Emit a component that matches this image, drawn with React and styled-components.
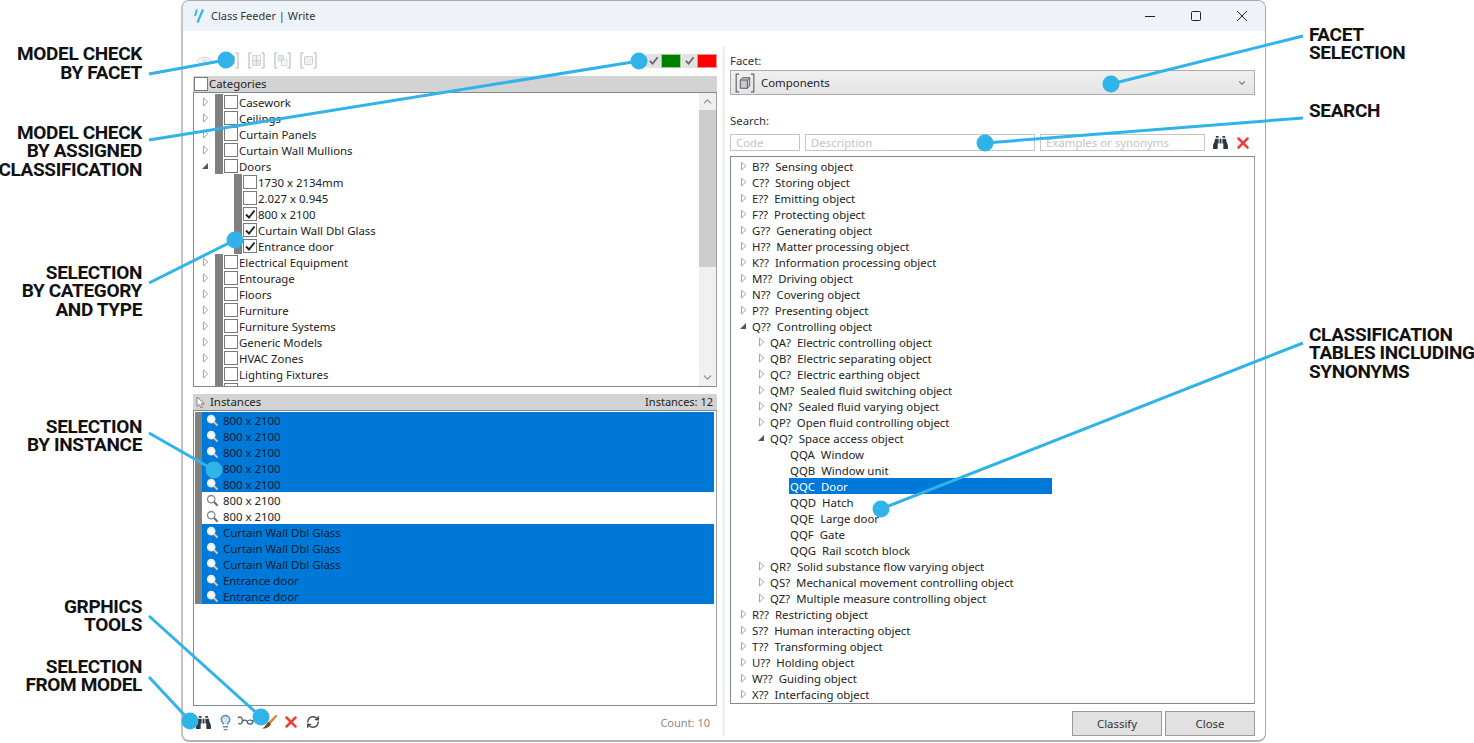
import React from "react";
import styled, { createGlobalStyle } from "styled-components";
import { X, RefreshCw, Lightbulb, ChevronDown, ChevronUp } from "lucide-react";
import { FaBinoculars } from "react-icons/fa";

const UI_FONT = `"Noto Sans", "Open Sans", sans-serif`;
const ACCENT = "#2fb3e9";
const SELECTED = "#0078d7";

const GlobalStyle = createGlobalStyle`
  html, body {
    margin: 0;
    padding: 0;
    background: #fff;
    overflow: hidden;
  }
  * {
    box-sizing: border-box;
  }
`;

const Stage = styled.div`
  position: relative;
  width: 1474px;
  height: 743px;
  padding-left: 181px;
  font-family: ${UI_FONT};
  font-size: 11.4px;
  color: #222;
`;

const Window = styled.div`
  width: 1085px;
  height: 742px;
  display: flex;
  flex-direction: column;
  background: #fff;
  border: 1px solid #a8a8a8;
  border-left: 2px solid #c4c4c4;
  border-bottom: 2px solid #b4b4b4;
  border-radius: 8px;
  overflow: hidden;
`;

const TitleBar = styled.div`
  height: 30px;
  flex: none;
  display: flex;
  align-items: center;
  background: #eef3f9;
  padding-left: 8px;
`;

const Title = styled.span`
  margin-left: 4px;
  padding-bottom: 2px;
  font-size: 11px;
  color: #333;
  flex: 1;
`;

const WindowButton = styled.div`
  width: 46px;
  height: 30px;
  display: flex;
  align-items: center;
  justify-content: center;
  color: #222;
`;

const Body = styled.div`
  flex: 1;
  display: flex;
  min-height: 0;
  padding: 15px 10px 0 10px;
`;

const LeftPane = styled.div`
  width: 524px;
  flex: none;
  display: flex;
  flex-direction: column;
  padding-top: 4px;
`;

const Gutter = styled.div`
  width: 13px;
  flex: none;
  display: flex;
  justify-content: center;
  padding-bottom: 4px;
  &::after {
    content: "";
    width: 3px;
    background: #f0f0f0;
  }
`;

const RightPane = styled.div`
  width: 525px;
  flex: none;
  display: flex;
  flex-direction: column;
`;

const Toolbar = styled.div`
  height: 20px;
  flex: none;
  display: flex;
  align-items: center;
  gap: 9px;
  margin-bottom: 6px;
  padding-left: 3px;
`;

const FadedIcon = styled.svg`
  width: 17px;
  height: 17px;
  opacity: ${(p) => p.$opacity};
  flex: none;
  margin-top: 1px;
`;

const CheckLegend = styled.div`
  margin-left: auto;
  margin-top: 1px;
  display: flex;
  align-items: center;
`;

const LegendCheck = styled.div`
  width: 15px;
  height: 14px;
  background: #e2e2e2;
  display: flex;
  align-items: center;
  justify-content: center;
  margin-left: 1px;
`;

const Swatch = styled.div`
  width: 20px;
  height: 14px;
  background: ${(p) => p.$color};
  border: 1px solid ${(p) => p.$edge};
`;

const PanelHeader = styled.div`
  height: 16px;
  flex: none;
  display: flex;
  align-items: center;
  background: #d3d3d3;
  color: #222;
  padding-right: 4px;
  line-height: 16px;
`;

const HeaderCount = styled.span`
  margin-left: auto;
  font-size: 11px;
`;

const HeaderPointer = styled.span`
  display: flex;
  width: 17px;
  padding-left: 3px;
`;

const ListBox = styled.div`
  height: ${(p) => p.$height}px;
  flex: none;
  position: relative;
  display: flex;
  border: 1px solid #828790;
  border-right-color: #a0a0a0;
  background: #fff;
  overflow: hidden;
  margin-bottom: ${(p) => p.$gap || 0}px;
`;

const Rows = styled.div`
  flex: 1;
  min-width: 0;
  padding: ${(p) => p.$top}px ${(p) => p.$right || 0}px 0 ${(p) => p.$left || 0}px;
  overflow: hidden;
`;

const ScrollBar = styled.div`
  width: 17px;
  flex: none;
  display: flex;
  flex-direction: column;
  background: #f0f0f0;
`;

const ScrollButton = styled.div`
  height: 17px;
  flex: none;
  display: flex;
  align-items: center;
  justify-content: center;
  color: #8a8a8a;
`;

const ScrollThumb = styled.div`
  height: 157px;
  flex: none;
  background: #cdcdcd;
`;

const ScrollRest = styled.div`
  flex: 1;
`;

const CategoryRow = styled.div`
  height: 16px;
  display: flex;
  align-items: center;
  padding-left: ${(p) => (p.$child ? 40 : 6)}px;
  white-space: nowrap;
`;

const Arrow = styled.span`
  width: 10px;
  height: 16px;
  flex: none;
  display: flex;
  align-items: center;
  justify-content: center;
  margin-right: ${(p) => p.$gap || 0}px;
`;

const SideBar = styled.span`
  width: 8px;
  height: 16px;
  flex: none;
  background: #808080;
  margin-left: ${(p) => p.$gap}px;
`;

const InstanceBar = styled.span`
  width: 7px;
  height: 16px;
  flex: none;
  background: #808080;
`;

const Box = styled.span`
  width: 14px;
  height: 14px;
  flex: none;
  display: flex;
  align-items: center;
  justify-content: center;
  background: #fff;
  border: 1px solid #7a7a7a;
  margin: 0 1px 1px 1px;
`;

const InstanceRow = styled.div`
  height: 16px;
  display: flex;
  align-items: center;
  white-space: nowrap;
`;

const InstanceBody = styled.div`
  flex: 1;
  height: 16px;
  display: flex;
  align-items: center;
  gap: 4px;
  padding-left: 4px;
  background: ${(p) => (p.$selected ? SELECTED : "#fff")};
  color: ${(p) => (p.$selected ? "#08213a" : "#222")};
`;

const BottomBar = styled.div`
  flex: 1;
  display: flex;
  align-items: center;
  margin-left: -1px;
  padding: 0 7px 2px 0;
  color: #8a8a8a;
  font-size: 11px;
`;

const BottomIcon = styled.span`
  width: 22px;
  display: flex;
  align-items: center;
  justify-content: center;
`;

const CountText = styled.span`
  margin-left: auto;
`;

const FieldLabel = styled.div`
  height: 14px;
  line-height: 14px;
  flex: none;
  margin-top: ${(p) => p.$top}px;
  margin-bottom: ${(p) => p.$bottom}px;
  color: #333;
`;

const Combo = styled.div`
  height: 25px;
  flex: none;
  display: flex;
  align-items: center;
  gap: 6px;
  padding: 0 7px 0 4px;
  border: 1px solid #acacac;
  background: linear-gradient(#f0f0f0, #e5e5e5);
`;

const ComboValue = styled.span`
  flex: 1;
`;

const SearchRow = styled.div`
  height: 17px;
  flex: none;
  display: flex;
  align-items: center;
  gap: 5px;
  margin-bottom: 5px;
`;

const SearchInput = styled.input`
  width: ${(p) => p.$width}px;
  height: 17px;
  flex: none;
  border: 1px solid #c4c4c4;
  padding: 0 5px;
  font-family: ${UI_FONT};
  font-size: 11.4px;
  outline: none;
  &::placeholder {
    color: #c4c4c4;
  }
`;

const SearchIcons = styled.div`
  display: flex;
  align-items: center;
  gap: 6px;
  margin-left: 3px;
`;

const ClassRow = styled.div`
  height: 16px;
  display: flex;
  align-items: center;
  padding-left: ${(p) => 7 + p.$level * 18}px;
  white-space: nowrap;
`;

const ClassLabel = styled.span`
  display: flex;
  align-items: center;
  height: 16px;
  gap: 6px;
  margin-left: ${(p) => (p.$leaf ? 15 : 0)}px;
  padding-left: 1px;
  width: ${(p) => (p.$selected ? "263px" : "auto")};
  background: ${(p) => (p.$selected ? SELECTED : "transparent")};
  color: ${(p) => (p.$selected ? "#fff" : "#222")};
`;

const Footer = styled.div`
  flex: 1;
  display: flex;
  justify-content: flex-end;
  align-items: flex-start;
  gap: 3px;
  padding-top: 7px;
`;

const FooterButton = styled.div`
  width: 90px;
  height: 25px;
  display: flex;
  align-items: center;
  justify-content: center;
  background: #e1e1e1;
  border: 1px solid #9a9a9a;
  color: #333;
`;

const Overlay = styled.svg`
  position: absolute;
  left: 0;
  top: 0;
  pointer-events: none;
`;

const Callout = styled.div`
  position: absolute;
  top: ${(p) => p.$top}px;
  ${(p) => (p.$right ? "left: 1309px;" : "right: 1332px;")}
  width: max-content;
  text-align: ${(p) => (p.$right ? "left" : "right")};
  font-family: Roboto, sans-serif;
  font-weight: 700;
  font-size: 19px;
  line-height: 18.5px;
  letter-spacing: -0.35px;
  color: #111;
  white-space: pre;
`;

const Tri = ({ open }) =>
  open ? (
    <svg width="8" height="8" viewBox="0 0 8 8">
      <path d="M7 1 L7 7 L1 7 Z" fill="#555" />
    </svg>
  ) : (
    <svg width="7" height="10" viewBox="0 0 7 10">
      <path d="M1.5 1 L5.8 5 L1.5 9 Z" fill="#fff" stroke="#a6a6a6" />
    </svg>
  );

const Tick = ({ color = "#222", size = 12 }) => (
  <svg width={size} height={size} viewBox="0 0 12 12">
    <path d="M2 6.5 L5 9.5 L10.5 2.5" fill="none" stroke={color} strokeWidth="2" />
  </svg>
);

const Logo = () => (
  <svg width="16" height="16" viewBox="0 0 16 16">
    <path d="M6 1.5 L4 8" stroke="#35b5ea" strokeWidth="2" fill="none" />
    <path d="M12 1.5 L6.5 14.5" stroke="#35b5ea" strokeWidth="2.2" fill="none" />
  </svg>
);

const Brackets = () => (
  <path d="M3.5 1 H1 V16 H3.5 M13.5 1 H16 V16 H13.5" fill="none" stroke="#666" strokeWidth="1" />
);

const CubeGlyph = ({ opacity = 0.5, size = 17 }) => (
  <FadedIcon viewBox="0 0 17 17" $opacity={opacity} style={size !== 17 ? { width: size, height: size, margin: 0 } : undefined}>
    <Brackets />
    <path d="M4.5 6 L6.5 4 H12.5 V11 L10.5 13 H4.5 Z" fill="#c4ccd2" stroke="#555" strokeWidth="0.8" />
    <path d="M4.5 6 H10.5 V13 M10.5 6 L12.5 4" fill="none" stroke="#555" strokeWidth="0.8" />
  </FadedIcon>
);

const GridGlyph = () => (
  <FadedIcon viewBox="0 0 17 17" $opacity={0.5}>
    <Brackets />
    <rect x="4.5" y="3.5" width="4" height="5" fill="#dfe6ee" stroke="#999" strokeWidth="0.7" />
    <rect x="8.5" y="3.5" width="4" height="5" fill="#e9efe2" stroke="#999" strokeWidth="0.7" />
    <rect x="4.5" y="8.5" width="4" height="5" fill="#bfe3bf" stroke="#999" strokeWidth="0.7" />
    <rect x="8.5" y="8.5" width="4" height="5" fill="#bfe3bf" stroke="#999" strokeWidth="0.7" />
  </FadedIcon>
);

const PairGlyph = () => (
  <FadedIcon viewBox="0 0 17 17" $opacity={0.5}>
    <Brackets />
    <rect x="4" y="3.5" width="5.5" height="5.5" fill="#b9d6f2" stroke="#8aa" strokeWidth="0.7" />
    <rect x="7.5" y="8" width="5.5" height="5.5" fill="#eef2f6" stroke="#999" strokeWidth="0.7" />
  </FadedIcon>
);

const SquareGlyph = () => (
  <FadedIcon viewBox="0 0 17 17" $opacity={0.5}>
    <Brackets />
    <rect x="4.5" y="4.5" width="8" height="8" rx="1" fill="#e4e4e4" stroke="#888" strokeWidth="0.8" />
  </FadedIcon>
);

const EyeGlyph = () => (
  <FadedIcon viewBox="0 0 17 17" $opacity={0.5}>
    <path d="M1 9 C4 4 12 4 16 9 C12 14 4 14 1 9 Z" fill="#eee" stroke="#aaa" />
    <circle cx="8.5" cy="9" r="2.5" fill="#ccc" />
  </FadedIcon>
);

const Magnifier = ({ selected }) => (
  <svg width="13" height="13" viewBox="0 0 13 13" style={{ flex: "none" }}>
    <circle cx="5.2" cy="5.2" r="3.7" fill={selected ? "#f4f8fb" : "#fff"} stroke={selected ? "#dfe7ee" : "#8a8a8a"} strokeWidth="1.3" />
    <path d="M8 8 L11.6 11.6" stroke={selected ? "#c9ccce" : "#666"} strokeWidth="2" />
  </svg>
);

const CursorArrow = () => (
  <svg width="10" height="13" viewBox="0 0 10 13">
    <path d="M1 1 L1 10.5 L3.4 8.4 L5 12 L6.6 11.3 L5 7.8 L8.5 7.8 Z" fill="#fff" stroke="#777" strokeWidth="0.9" />
  </svg>
);

const Glasses = () => (
  <svg width="20" height="14" viewBox="0 0 20 14">
    <path
      d="M1 3 C3 1 5 2 5.5 5 C5.5 9 2.5 10 1.5 8 M5.5 6 C7 4.5 9 5 10 6.5 C11 10 15 10 16 7 C16 5 12 4 10 6.5 M16 6 L19 6"
      fill="none"
      stroke="#3c5a66"
      strokeWidth="1.2"
    />
  </svg>
);

const Brush = () => (
  <svg width="18" height="18" viewBox="0 0 18 18">
    <path d="M9 9 L16 2 L17 3 L10.5 10.5 Z" fill="#e8892a" stroke="#a8561a" strokeWidth="0.5" />
    <path d="M8.5 8.5 L11 11 C10 14 6 16 2 15.5 C5 14.5 6 11 8.5 8.5 Z" fill="#7a4a22" />
  </svg>
);

const categoriesTop = ["Casework", "Ceilings", "Curtain Panels", "Curtain Wall Mullions"];
const doorTypes = [
  ["1730 x 2134mm", false],
  ["2.027 x 0.945", false],
  ["800 x 2100", true],
  ["Curtain Wall Dbl Glass", true],
  ["Entrance door", true],
];
const categoriesRest = [
  "Electrical Equipment",
  "Entourage",
  "Floors",
  "Furniture",
  "Furniture Systems",
  "Generic Models",
  "HVAC Zones",
  "Lighting Fixtures",
  "",
];

const instances = [
  ["800 x 2100", true],
  ["800 x 2100", true],
  ["800 x 2100", true],
  ["800 x 2100", true],
  ["800 x 2100", true],
  ["800 x 2100", false],
  ["800 x 2100", false],
  ["Curtain Wall Dbl Glass", true],
  ["Curtain Wall Dbl Glass", true],
  ["Curtain Wall Dbl Glass", true],
  ["Entrance door", true],
  ["Entrance door", true],
];

// level, code, name, state: c = collapsed, o = open, l = leaf, s = selected leaf
const classes = [
  [0, "B??", "Sensing object", "c"],
  [0, "C??", "Storing object", "c"],
  [0, "E??", "Emitting object", "c"],
  [0, "F??", "Protecting object", "c"],
  [0, "G??", "Generating object", "c"],
  [0, "H??", "Matter processing object", "c"],
  [0, "K??", "Information processing object", "c"],
  [0, "M??", "Driving object", "c"],
  [0, "N??", "Covering object", "c"],
  [0, "P??", "Presenting object", "c"],
  [0, "Q??", "Controlling object", "o"],
  [1, "QA?", "Electric controlling object", "c"],
  [1, "QB?", "Electric separating object", "c"],
  [1, "QC?", "Electric earthing object", "c"],
  [1, "QM?", "Sealed fluid switching object", "c"],
  [1, "QN?", "Sealed fluid varying object", "c"],
  [1, "QP?", "Open fluid controlling object", "c"],
  [1, "QQ?", "Space access object", "o"],
  [2, "QQA", "Window", "l"],
  [2, "QQB", "Window unit", "l"],
  [2, "QQC", "Door", "s"],
  [2, "QQD", "Hatch", "l"],
  [2, "QQE", "Large door", "l"],
  [2, "QQF", "Gate", "l"],
  [2, "QQG", "Rail scotch block", "l"],
  [1, "QR?", "Solid substance flow varying object", "c"],
  [1, "QS?", "Mechanical movement controlling object", "c"],
  [1, "QZ?", "Multiple measure controlling object", "c"],
  [0, "R??", "Restricting object", "c"],
  [0, "S??", "Human interacting object", "c"],
  [0, "T??", "Transforming object", "c"],
  [0, "U??", "Holding object", "c"],
  [0, "W??", "Guiding object", "c"],
  [0, "X??", "Interfacing object", "c"],
];

const callouts = [
  { top: 45, text: "MODEL CHECK\nBY FACET" },
  { top: 123.5, text: "MODEL CHECK\nBY ASSIGNED\nCLASSIFICATION" },
  { top: 263.5, text: "SELECTION\nBY CATEGORY\nAND TYPE" },
  { top: 417.5, text: "SELECTION\nBY INSTANCE" },
  { top: 597.5, text: "GRPHICS\nTOOLS" },
  { top: 657.5, text: "SELECTION\nFROM MODEL" },
  { top: 25.5, text: "FACET\nSELECTION", right: true },
  { top: 101.5, text: "SEARCH", right: true },
  { top: 325.5, text: "CLASSIFICATION\nTABLES INCLUDING\nSYNONYMS", right: true },
];

const leaders = [
  [149, 74, 226, 60],
  [149, 140, 639, 61],
  [149, 283, 235, 240],
  [149, 433, 214, 470],
  [149, 616, 261, 717],
  [149, 677, 190, 721],
  [1303, 36, 1111, 84],
  [1303, 118, 985, 143],
  [1303, 343, 881, 509],
];

const App = () => {
  return (
    <Stage>
      <GlobalStyle />
      <Window>
        <TitleBar>
          <Logo />
          <Title>Class Feeder | Write</Title>
          <WindowButton>
            <svg width="12" height="12" viewBox="0 0 12 12">
              <path d="M1 6.5 H11" stroke="#222" />
            </svg>
          </WindowButton>
          <WindowButton>
            <svg width="12" height="12" viewBox="0 0 12 12">
              <rect x="1.5" y="1.5" width="9" height="9" rx="1" fill="none" stroke="#222" />
            </svg>
          </WindowButton>
          <WindowButton>
            <svg width="12" height="12" viewBox="0 0 12 12">
              <path d="M1 1 L11 11 M11 1 L1 11" stroke="#222" />
            </svg>
          </WindowButton>
        </TitleBar>
        <Body>
          <LeftPane>
            <Toolbar>
              <EyeGlyph />
              <CubeGlyph />
              <GridGlyph />
              <PairGlyph />
              <SquareGlyph />
              <CheckLegend>
                <LegendCheck>
                  <Tick color="#666" size={11} />
                </LegendCheck>
                <Swatch $color="#008000" $edge="#8fd08f" />
                <LegendCheck>
                  <Tick color="#666" size={11} />
                </LegendCheck>
                <Swatch $color="#ff0000" $edge="#ff8a8a" />
              </CheckLegend>
            </Toolbar>

            <PanelHeader>
              <Box />
              Categories
            </PanelHeader>
            <ListBox $height={295} $gap={7}>
              <Rows $top={1}>
                {categoriesTop.map((name) => (
                  <CategoryRow key={name}>
                    <Arrow>
                      <Tri />
                    </Arrow>
                    <SideBar $gap={5} />
                    <Box />
                    {name}
                  </CategoryRow>
                ))}
                <CategoryRow>
                  <Arrow>
                    <Tri open />
                  </Arrow>
                  <SideBar $gap={5} />
                  <Box />
                  Doors
                </CategoryRow>
                {doorTypes.map(([name, checked]) => (
                  <CategoryRow key={name} $child>
                    <SideBar $gap={0} />
                    <Box>{checked && <Tick />}</Box>
                    {name}
                  </CategoryRow>
                ))}
                {categoriesRest.map((name) => (
                  <CategoryRow key={name || "clipped"}>
                    <Arrow>{name && <Tri />}</Arrow>
                    <SideBar $gap={5} />
                    <Box />
                    {name}
                  </CategoryRow>
                ))}
              </Rows>
              <ScrollBar>
                <ScrollButton>
                  <ChevronUp size={13} />
                </ScrollButton>
                <ScrollThumb />
                <ScrollRest />
                <ScrollButton>
                  <ChevronDown size={13} />
                </ScrollButton>
              </ScrollBar>
            </ListBox>

            <PanelHeader>
              <HeaderPointer>
                <CursorArrow />
              </HeaderPointer>
              Instances
              <HeaderCount>Instances: 12</HeaderCount>
            </PanelHeader>
            <ListBox $height={296}>
              <Rows $top={1} $left={1} $right={2}>
                {instances.map(([name, selected], i) => (
                  <InstanceRow key={i}>
                    <InstanceBar />
                    <InstanceBody $selected={selected}>
                      <Magnifier selected={selected} />
                      {name}
                    </InstanceBody>
                  </InstanceRow>
                ))}
              </Rows>
            </ListBox>

            <BottomBar>
              <BottomIcon>
                <FaBinoculars size={15} color="#2c3a40" />
              </BottomIcon>
              <BottomIcon>
                <Lightbulb size={17} color="#5a8fb8" fill="#cfe6f8" />
              </BottomIcon>
              <BottomIcon>
                <Glasses />
              </BottomIcon>
              <BottomIcon>
                <Brush />
              </BottomIcon>
              <BottomIcon>
                <X size={18} strokeWidth={3.4} color="#e8423c" />
              </BottomIcon>
              <BottomIcon>
                <RefreshCw size={14} strokeWidth={2.4} color="#444" />
              </BottomIcon>
              <CountText>Count: 10</CountText>
            </BottomBar>
          </LeftPane>

          <Gutter />

          <RightPane>
            <FieldLabel $top={8} $bottom={2}>
              Facet:
            </FieldLabel>
            <Combo>
              <CubeGlyph opacity={1} size={20} />
              <ComboValue>Components</ComboValue>
              <ChevronDown size={10} strokeWidth={2.5} color="#555" />
            </Combo>
            <FieldLabel $top={19} $bottom={6}>
              Search:
            </FieldLabel>
            <SearchRow>
              <SearchInput $width={70} placeholder="Code" readOnly />
              <SearchInput $width={230} placeholder="Description" readOnly />
              <SearchInput $width={165} placeholder="Examples or synonyms" readOnly />
              <SearchIcons>
                <FaBinoculars size={15} color="#2c3a40" />
                <X size={18} strokeWidth={3.4} color="#e8423c" />
              </SearchIcons>
            </SearchRow>
            <ListBox $height={548}>
              <Rows $top={1}>
                {classes.map(([level, code, name, state]) => (
                  <ClassRow key={code} $level={level}>
                    {state !== "l" && state !== "s" && (
                      <Arrow $gap={3}>{state === "o" ? <Tri open /> : <Tri />}</Arrow>
                    )}
                    <ClassLabel $leaf={state === "l" || state === "s"} $selected={state === "s"}>
                      <span>{code}</span>
                      <span>{name}</span>
                    </ClassLabel>
                  </ClassRow>
                ))}
              </Rows>
            </ListBox>
            <Footer>
              <FooterButton>Classify</FooterButton>
              <FooterButton>Close</FooterButton>
            </Footer>
          </RightPane>
        </Body>
      </Window>

      <Overlay width="1474" height="743" viewBox="0 0 1474 743">
        {leaders.map(([x1, y1, x2, y2]) => (
          <g key={`${x1}-${y1}`}>
            <line x1={x1} y1={y1} x2={x2} y2={y2} stroke={ACCENT} strokeWidth="3" />
            <circle cx={x2} cy={y2} r="8.5" fill={ACCENT} />
          </g>
        ))}
      </Overlay>
      {callouts.map((c) => (
        <Callout key={c.text} $top={c.top} $right={c.right}>
          {c.text}
        </Callout>
      ))}
    </Stage>
  );
};

export default App;
